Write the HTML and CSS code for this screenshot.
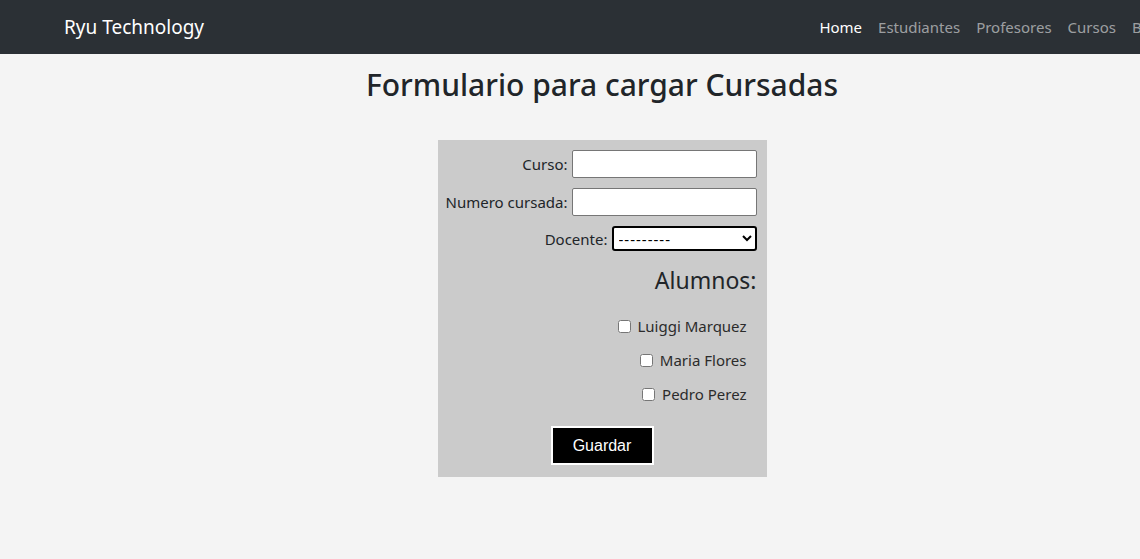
FILE: index.html
```html
<!DOCTYPE html>
<html lang="es">
<head>
<meta charset="utf-8">
<title>Ryu Technology</title>
<link rel="stylesheet" href="styles.css">
</head>
<body>
<div class="page">
  <nav class="navbar">
    <a class="brand" href="#">Ryu Technology</a>
    <ul class="nav">
      <li><a class="active" href="#">Home</a></li>
      <li><a href="#">Estudiantes</a></li>
      <li><a href="#">Profesores</a></li>
      <li><a href="#">Cursos</a></li>
      <li><a href="#">Buscar</a></li>
    </ul>
  </nav>
  <main class="main">
    <h1 class="title">Formulario para cargar Cursadas</h1>
    <form class="box">
      <div class="row"><label for="curso">Curso:</label><input id="curso" class="text" type="text"></div>
      <div class="row"><label for="num">Numero cursada:</label><input id="num" class="text" type="text"></div>
      <div class="row"><label for="doc">Docente:</label><select id="doc" class="select"><option>---------</option></select></div>
      <h3 class="sub">Alumnos:</h3>
      <ul class="list">
        <li><label><input type="checkbox" class="cb"> Luiggi Marquez</label></li>
        <li><label><input type="checkbox" class="cb"> Maria Flores</label></li>
        <li><label><input type="checkbox" class="cb"> Pedro Perez</label></li>
      </ul>
      <div class="actions"><button type="button" class="btn">Guardar</button></div>
    </form>
  </main>
</div>
</body>
</html>
```

FILE: styles.css
```css
html, body { margin: 0; padding: 0; overflow: hidden; }
body {
  background: #f4f4f4;
  font-family: "Noto Sans", "Open Sans", sans-serif;
  color: #212529;
}
.page { width: 1204px; }
.navbar {
  height: 54px;
  background: #2b3035;
  display: flex;
  align-items: center;
  padding-left: 64px;
  box-sizing: border-box;
}
.brand {
  color: #fff;
  text-decoration: none;
  font-size: 19px;
  margin-right: auto;
  white-space: nowrap;
}
.nav {
  list-style: none;
  display: flex;
  margin: 0;
  padding: 0 16px 0 0;
}
.nav a {
  display: block;
  padding: 8px 8px;
  font-size: 15px;
  color: rgba(255,255,255,0.55);
  text-decoration: none;
  white-space: nowrap;
}
.nav a.active { color: #fff; }
.main { display: flex; flex-direction: column; align-items: center; }
.title {
  margin: 12px 0 36px;
  font-size: 30px;
  font-weight: 500;
  line-height: 38px;
  white-space: nowrap;
}
.box {
  width: 329px;
  box-sizing: border-box;
  background: #cbcbcb;
  padding: 10px 10px 12px;
  display: flex;
  flex-direction: column;
  align-items: flex-end;
}
.row {
  display: flex;
  align-items: center;
  font-size: 15px;
  margin-bottom: 10px;
  white-space: nowrap;
}
.row label { margin-right: 4px; }
.text {
  width: 185px;
  height: 28px;
  box-sizing: border-box;
  border: 1px solid #767676;
  border-radius: 2px;
  background: #fff;
  flex: none;
}
.select {
  width: 145px;
  height: 25px;
  box-sizing: border-box;
  border: 2px solid #000;
  border-radius: 3px;
  background: #fff;
  color: #000;
  font-family: "Noto Sans", sans-serif;
  font-size: 15px;
  letter-spacing: 1px;
  padding: 0 0 0 1px;
  flex: none;
}
.sub {
  margin: 4px 0 19px;
  font-size: 23px;
  font-weight: 400;
  line-height: 30px;
}
.list {
  list-style: none;
  margin: 0;
  padding: 0 10px 0 0;
  display: flex;
  flex-direction: column;
  align-items: flex-end;
  gap: 10px;
  font-size: 15px;
  color: #2b2b2b;
}
.list li { line-height: 24px; white-space: nowrap; }
.cb { width: 13px; height: 13px; margin: 0 3px 0 0; vertical-align: -1px; }
.actions {
  align-self: stretch;
  display: flex;
  justify-content: center;
  margin-top: 20px;
}
.btn {
  background: #000;
  color: #fff;
  border: 2px solid #fff;
  font-family: "Liberation Sans", Arial, sans-serif;
  font-size: 16px;
  width: 103px;
  height: 39px;
}
```
